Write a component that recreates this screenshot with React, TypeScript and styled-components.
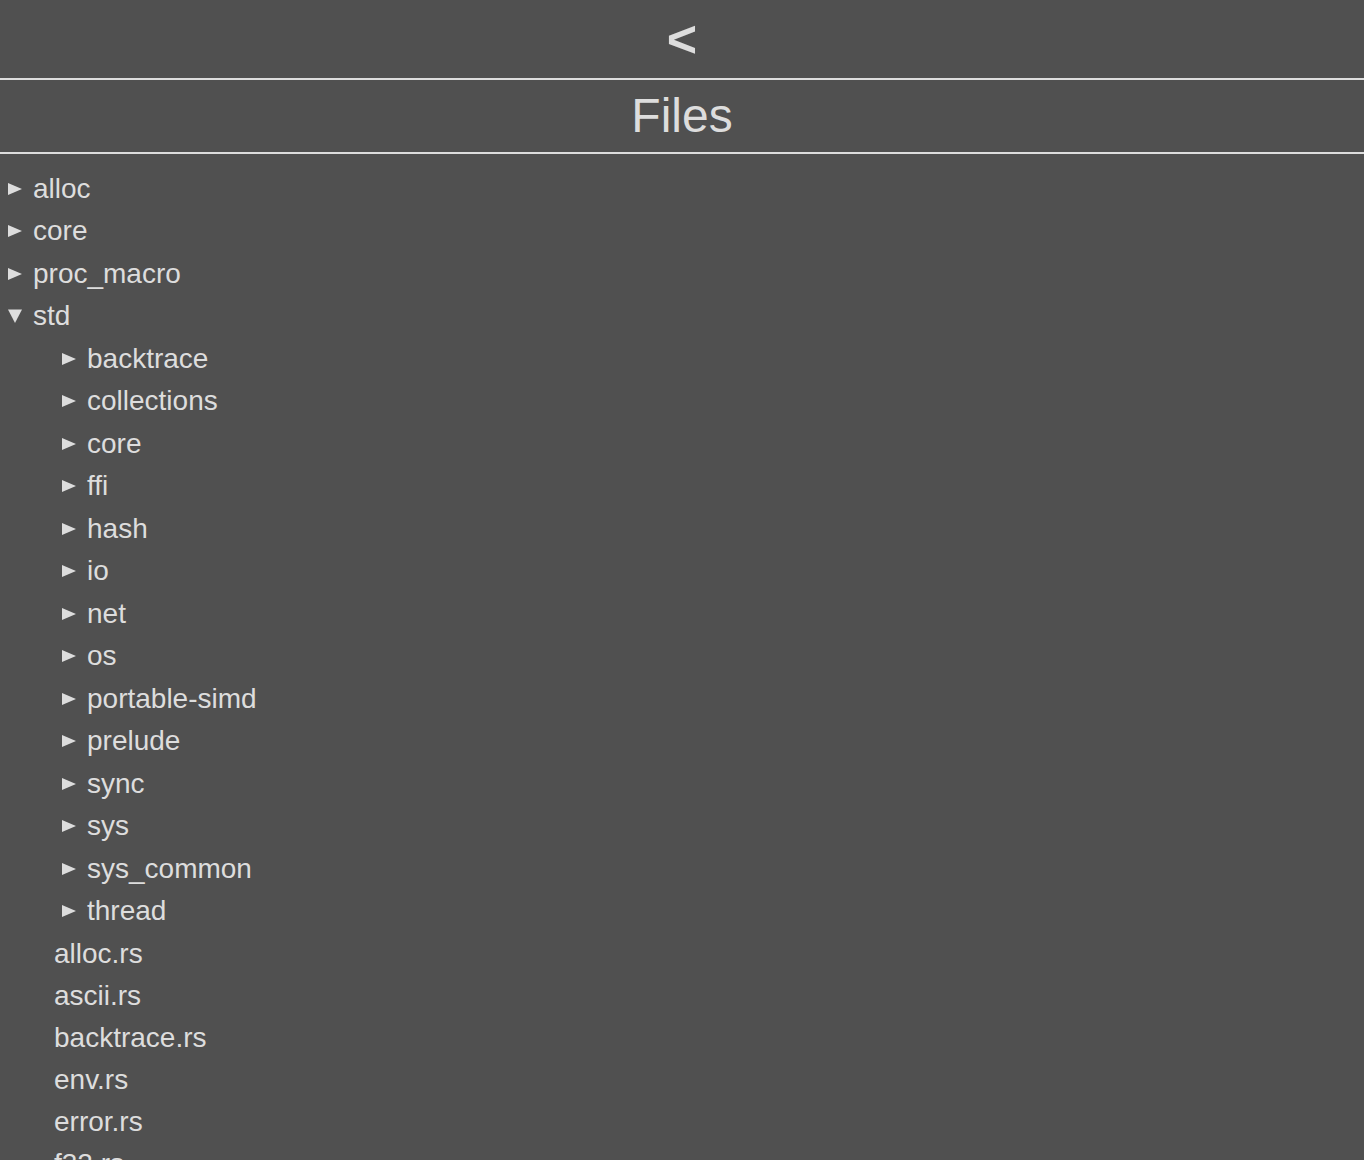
import * as React from "react"
import styled, { createGlobalStyle } from "styled-components"

const GlobalStyle = createGlobalStyle`
  html, body {
    margin: 0;
    padding: 0;
    background: #505050;
  }
  body {
    font-family: "Liberation Sans", Arial, sans-serif;
    color: #dddddd;
    overflow: hidden;
  }
`

const Page = styled.div`
  height: 1160px;
  overflow: hidden;
  background: #505050;
`

const TopBar = styled.header`
  height: 78px;
  line-height: 78px;
  text-align: center;
  font-size: 52px;
  font-weight: bold;
  border-bottom: 2px solid #dddddd;
`

const Title = styled.h1`
  margin: 0;
  height: 72px;
  line-height: 72px;
  text-align: center;
  font-size: 48px;
  font-weight: normal;
  border-bottom: 2px solid #dddddd;
`

const Tree = styled.div`
  padding-top: 13.5px;
  font-size: 28px;
`

const FolderRow = styled.div<{ $depth: number }>`
  display: flex;
  align-items: center;
  height: 42.5px;
  padding-left: ${(p) => (p.$depth === 0 ? 8 : 62)}px;
  white-space: nowrap;
`

const FileRow = styled.div`
  height: 42px;
  line-height: 42px;
  padding-left: 54px;
  white-space: nowrap;
`

const Marker = styled.svg`
  flex: none;
  width: 14px;
  height: 14px;
  margin-right: 11px;
  fill: #dddddd;
`

const Label = styled.span`
  line-height: 42px;
`

const Arrow = ({ open }: { open?: boolean }) => (
  <Marker viewBox="0 0 14 14">
    {open ? <polygon points="0,0.5 14,0.5 7,14" /> : <polygon points="0,1 14,7 0,13" />}
  </Marker>
)

const topLevel = ["alloc", "core", "proc_macro"]
const stdDirs = [
  "backtrace",
  "collections",
  "core",
  "ffi",
  "hash",
  "io",
  "net",
  "os",
  "portable-simd",
  "prelude",
  "sync",
  "sys",
  "sys_common",
  "thread",
]
const stdFiles = ["alloc.rs", "ascii.rs", "backtrace.rs", "env.rs", "error.rs", "f32.rs"]

const App: React.FC = () => {
  return (
    <Page>
      <GlobalStyle />
      <TopBar>&lt;</TopBar>
      <Title>Files</Title>
      <Tree>
        {topLevel.map((name) => (
          <FolderRow key={name} $depth={0}>
            <Arrow />
            <Label>{name}</Label>
          </FolderRow>
        ))}
        <FolderRow $depth={0}>
          <Arrow open />
          <Label>std</Label>
        </FolderRow>
        {stdDirs.map((name) => (
          <FolderRow key={name} $depth={1}>
            <Arrow />
            <Label>{name}</Label>
          </FolderRow>
        ))}
        {stdFiles.map((name) => (
          <FileRow key={name}>{name}</FileRow>
        ))}
      </Tree>
    </Page>
  )
}

export default App
